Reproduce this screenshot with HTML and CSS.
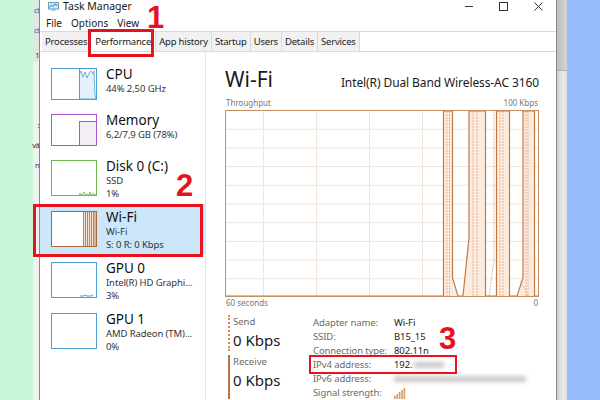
FILE: index.html
```html
<!DOCTYPE html>
<html lang="en">
<head>
    <meta charset="UTF-8">
    <meta name="viewport" content="width=device-width, initial-scale=1.0">
    <title>Task Manager - Wi-Fi</title>
    <link rel="stylesheet" href="styles.css">
</head>
<body>
<div class="screen">
    <div class="bg-left"></div>
    <div class="behind">
        <div class="frag f1">ct</div>
        <div class="frag f2">ct</div>
        <div class="frag f3">1</div>
        <div class="frag f4">:</div>
        <div class="frag f5">vä</div>
        <div class="frag f6">n</div>
    </div>

    <div class="window">
        <div class="titlebar">
            <svg class="app-icon" width="11" height="9" viewBox="0 0 11 9">
                <rect x="0.5" y="0.5" width="10" height="6.5" fill="#d7e8f4" stroke="#6f9cbb"/>
                <polyline points="1.5,5.5 3.5,3 5,4.5 7,2 9.5,3.5" fill="none" stroke="#2b7bb4" stroke-width="1"/>
                <rect x="3.5" y="7.5" width="4" height="1" fill="#6f9cbb"/>
            </svg>
            <span class="app-title">Task Manager</span>
            <div class="controls">
                <span class="ctl"><svg width="8" height="8" viewBox="0 0 8 8"><line x1="0" y1="4.5" x2="8" y2="4.5" stroke="#333"/></svg></span>
                <span class="ctl"><svg width="9" height="9" viewBox="0 0 9 9"><rect x="0.5" y="0.5" width="8" height="8" fill="none" stroke="#333"/></svg></span>
                <span class="ctl"><svg width="9" height="9" viewBox="0 0 9 9"><path d="M0.5 0.5 L8.5 8.5 M8.5 0.5 L0.5 8.5" stroke="#333"/></svg></span>
            </div>
        </div>

        <div class="menubar">
            <span>File</span>
            <span>Options</span>
            <span>View</span>
        </div>

        <div class="tabs">
            <span class="tab">Processes</span>
            <span class="tab active">Performance</span>
            <span class="tab">App history</span>
            <span class="tab">Startup</span>
            <span class="tab">Users</span>
            <span class="tab">Details</span>
            <span class="tab">Services</span>
        </div>

        <div class="content">
            <div class="sidebar">
                <div class="item">
                    <svg class="thumb" width="46" height="32" viewBox="0 0 46 32">
                        <rect x="0.5" y="0.5" width="45" height="31" fill="#fff" stroke="#4d9fd6"/>
                        <path d="M28.5 31 L28.5 6 L30 3 L32 9 L34 4 L36 10 L38 5 L40 3 L42 6 L43 3 L44 27 L45 31 Z" fill="#e4f0fa" stroke="#4d9fd6" stroke-width="0.8"/>
                        <line x1="28.5" y1="0" x2="28.5" y2="32" stroke="#4d9fd6"/>
                    </svg>
                    <div class="info">
                        <div class="name">CPU</div>
                        <div class="sub">44% 2,50 GHz</div>
                    </div>
                </div>
                <div class="item">
                    <svg class="thumb" width="46" height="32" viewBox="0 0 46 32">
                        <rect x="0.5" y="0.5" width="45" height="31" fill="#fff" stroke="#b154c9"/>
                        <rect x="28.5" y="7.5" width="17" height="24" fill="#f3eef5" stroke="#b154c9"/>
                    </svg>
                    <div class="info">
                        <div class="name">Memory</div>
                        <div class="sub">6,2/7,9 GB (78%)</div>
                    </div>
                </div>
                <div class="item tall">
                    <svg class="thumb" width="46" height="36" viewBox="0 0 46 36">
                        <rect x="0.5" y="0.5" width="45" height="35" fill="#fff" stroke="#6db84c"/>
                        <polyline points="28,35 29,33 30,35 32,34 33,32 34,35 36,34 38,35 39,32 40,35 42,33 43,35 45,34" fill="none" stroke="#6db84c" stroke-width="0.8"/>
                    </svg>
                    <div class="info">
                        <div class="name">Disk 0 (C:)</div>
                        <div class="sub">SSD</div>
                        <div class="sub">1%</div>
                    </div>
                </div>
                <div class="item tall selected">
                    <svg class="thumb" width="46" height="36" viewBox="0 0 46 36">
                        <rect x="0.5" y="0.5" width="45" height="35" fill="#fff" stroke="#a86a3d"/>
                        <rect x="32" y="1" width="13" height="34" fill="#f6e4d6"/>
                        <path d="M32.5 1 V35 M34.5 1 V35 M36.5 1 V35 M38.5 1 V35 M40.5 1 V35 M42.5 1 V35 M44 1 V35" stroke="#b06b38" stroke-width="0.8"/>
                    </svg>
                    <div class="info">
                        <div class="name">Wi-Fi</div>
                        <div class="sub">Wi-Fi</div>
                        <div class="sub">S: 0 R: 0 Kbps</div>
                    </div>
                </div>
                <div class="item tall">
                    <svg class="thumb" width="46" height="36" viewBox="0 0 46 36">
                        <rect x="0.5" y="0.5" width="45" height="35" fill="#fff" stroke="#4d9fd6"/>
                        <polyline points="29,34 33,34 34,33 36,34 40,34 42,33" fill="none" stroke="#4d9fd6" stroke-width="1"/>
                    </svg>
                    <div class="info">
                        <div class="name">GPU 0</div>
                        <div class="sub">Intel(R) HD Graphi...</div>
                        <div class="sub">3%</div>
                    </div>
                </div>
                <div class="item tall">
                    <svg class="thumb" width="46" height="36" viewBox="0 0 46 36">
                        <rect x="0.5" y="0.5" width="45" height="35" fill="#fff" stroke="#4d9fd6"/>
                    </svg>
                    <div class="info">
                        <div class="name">GPU 1</div>
                        <div class="sub">AMD Radeon (TM)...</div>
                        <div class="sub">0%</div>
                    </div>
                </div>
            </div>

            <div class="main">
                <div class="head">
                    <h1>Wi-Fi</h1>
                    <span class="adapter">Intel(R) Dual Band Wireless-AC 3160</span>
                </div>
                <div class="axis">
                    <span>Throughput</span>
                    <span>100 Kbps</span>
                </div>
                <svg class="graph" width="314" height="187" viewBox="0 0 314 187">
                    <g stroke="#f1e4d8" stroke-width="1">
                        <path d="M0 19.2 H314 M0 37.9 H314 M0 56.6 H314 M0 75.3 H314 M0 94 H314 M0 112.7 H314 M0 131.4 H314 M0 150.1 H314 M0 168.8 H314"/>
                        <path d="M38.5 0 V187 M91.5 0 V187 M144.5 0 V187 M197.5 0 V187 M250.5 0 V187 M303.5 0 V187"/>
                    </g>
                    <path d="M218.5 186 V1 H227.5 V168 L233 186 Z M244 128 V1 H260.5 V186 H238 Z M271.5 186 V1 H284.5 V186 Z M298 168 V1 H309.5 V186 H292 Z" fill="#fcece0"/>
                    <g fill="none" stroke="#e7a57a" stroke-width="0.8" stroke-dasharray="2 1">
                        <path d="M222 186 V1 M224.5 186 V1 M248 186 V1 M252 186 V1 M264 186 L269 150 V1 M275 186 V1 M278 186 V1 M301 186 V1 M303 186 V1 M303 186 L295 170"/>
                    </g>
                    <path d="M0 186 H218.5 V1 H227.5 V168 L233 186 H238 L244 128 V1 H260.5 V186 H271.5 V1 H284.5 V186 H292 L298 168 V1 H309.5 V186 H314" fill="none" stroke="#bf7a45" stroke-width="1.2"/>
                    <rect x="0.5" y="0.5" width="313" height="186" fill="none" stroke="#c68f62"/>
                </svg>
                <div class="axis">
                    <span>60 seconds</span>
                    <span>0</span>
                </div>

                <div class="stats">
                    <div class="rates">
                        <div class="rate send">
                            <div class="rate-label">Send</div>
                            <div class="rate-value">0 Kbps</div>
                        </div>
                        <div class="rate receive">
                            <div class="rate-label">Receive</div>
                            <div class="rate-value">0 Kbps</div>
                        </div>
                    </div>
                    <div class="details">
                        <span class="lbl">Adapter name:</span><span class="val">Wi-Fi</span>
                        <span class="lbl">SSID:</span><span class="val">B15_15</span>
                        <span class="lbl">Connection type:</span><span class="val">802.11n</span>
                        <span class="lbl">IPv4 address:</span><span class="val">192.<span class="blur short"></span></span>
                        <span class="lbl">IPv6 address:</span><span class="val"><span class="blur long"></span></span>
                        <span class="lbl">Signal strength:</span>
                        <span class="val">
                            <svg width="12" height="11" viewBox="0 0 12 11">
                                <g fill="#d39a66">
                                    <rect x="0" y="8" width="1.6" height="3"/>
                                    <rect x="2.4" y="6" width="1.6" height="5"/>
                                    <rect x="4.8" y="4" width="1.6" height="7"/>
                                    <rect x="7.2" y="2" width="1.6" height="9"/>
                                    <rect x="9.6" y="0" width="1.6" height="11"/>
                                </g>
                            </svg>
                        </span>
                    </div>
                </div>
            </div>
        </div>
    </div>

    <div class="scrollbar"><div class="thumbbar"></div></div>
    <div class="bg-right"></div>

    <!-- annotation marks drawn over the screenshot -->
    <div class="mark box1"></div>
    <div class="mark box2"></div>
    <div class="mark box3"></div>
    <div class="num n1">1</div>
    <div class="num n2">2</div>
    <div class="num n3">3</div>
</div>
</body>
</html>
```

FILE: styles.css
```css
body {
    margin: 0;
    font-family: "Noto Sans", "Open Sans", sans-serif;
    color: #1a1a1a;
}
.screen {
    position: relative;
    display: flex;
    width: 600px;
    height: 400px;
    overflow: hidden;
    background: #fff;
}
.bg-left {
    width: 33px;
    background: #c8f7d7;
}
.behind {
    position: relative;
    width: 6px;
    background: linear-gradient(#e3e5e3 0, #e3e5e3 62px, #eef3ef 62px);
}
.frag {
    position: absolute;
    right: 0;
    font-size: 7.5px;
    line-height: 10px;
    letter-spacing: -0.6px;
    color: #333;
}
.f1 { top: 5px; color: #3d5fa8; }
.f2 { top: 25px; color: #3d5fa8; }
.f3 { top: 50px; }
.f4 { top: 120px; }
.f5 { top: 140px; }
.f6 { top: 160px; }

.window {
    width: 516px;
    border-left: 1px solid #8a8a8a;
    border-right: 1px solid #8a8a8a;
    display: flex;
    flex-direction: column;
    background: #fff;
}

/* title + menu */
.titlebar {
    height: 16px;
    display: flex;
    align-items: flex-start;
}
.app-icon {
    margin: 2px 0 0 8px;
}
.app-title {
    margin-left: 4px;
    font-size: 10.5px;
    line-height: 13px;
}
.controls {
    margin-left: auto;
    display: flex;
}
.ctl {
    width: 35px;
    height: 12px;
    display: flex;
    justify-content: center;
    align-items: center;
}
.menubar {
    height: 16px;
    display: flex;
    gap: 9px;
    padding-left: 6px;
    font-size: 10px;
    line-height: 17px;
}

/* tabs */
.tabs {
    height: 19px;
    border-top: 1px solid #dadada;
    border-bottom: 1px solid #dadada;
    display: flex;
    padding-left: 2px;
}
.tab {
    padding: 0 3px;
    font-size: 9.5px;
    letter-spacing: -0.2px;
    line-height: 19px;
    background: #f1f1f1;
    border-right: 1px solid #dadada;
}
.tab.active {
    background: #fff;
    padding: 0 4px;
}

.content {
    flex: 1;
    display: flex;
}

/* sidebar */
.sidebar {
    width: 165px;
    border-right: 1px solid #e6e6e6;
    padding-top: 9px;
}
.item {
    box-sizing: border-box;
    height: 46px;
    padding: 6px 0 0 11px;
    display: flex;
    gap: 9px;
}
.item.tall {
    height: 51px;
}
.item.selected {
    background: #cce6fa;
}
.thumb {
    margin-top: 1px;
    flex: none;
}
.name {
    font-size: 13.5px;
    line-height: 15px;
    color: #111;
}
.sub {
    font-size: 9.5px;
    letter-spacing: -0.1px;
    line-height: 13px;
    color: #333;
}

/* main panel */
.main {
    flex: 1;
    padding: 14px 17px 0 19px;
}
.head {
    display: flex;
    justify-content: space-between;
    align-items: baseline;
    height: 26px;
}
.head h1 {
    margin: 0;
    font-size: 21px;
    font-weight: 400;
    line-height: 26px;
}
.adapter {
    font-size: 12px;
    letter-spacing: -0.1px;
}
.axis {
    display: flex;
    justify-content: space-between;
    font-size: 8px;
    line-height: 12px;
    color: #777;
    padding: 0 1px;
}
.head + .axis {
    margin-top: 5px;
}
.graph {
    display: block;
    margin-top: 1px;
}

.stats {
    display: flex;
    margin-top: 6px;
}
.rates {
    width: 85px;
    padding-left: 3px;
}
.rate {
    padding-left: 3px;
}
.send {
    border-left: 2px dotted #e08a52;
}
.receive {
    margin-top: 4px;
    border-left: 2px solid #b87443;
    height: 44px;
}
.rate-label {
    font-size: 9.5px;
    line-height: 14px;
    color: #6b6b6b;
}
.rate-value {
    font-size: 15px;
    line-height: 22px;
}
.details {
    margin-top: 1px;
    display: grid;
    grid-template-columns: 81px auto;
    grid-auto-rows: 14px;
    font-size: 9.5px;
    letter-spacing: -0.1px;
    line-height: 14px;
}
.lbl {
    color: #6b6b6b;
}
.val {
    color: #222;
    display: flex;
    align-items: center;
}
.blur {
    display: inline-block;
    height: 6px;
    background: #c9c9c9;
    filter: blur(2px);
}
.blur.short {
    width: 30px;
    margin-left: 2px;
}
.blur.long {
    width: 132px;
}

/* right side */
.scrollbar {
    width: 10px;
    background: linear-gradient(90deg, #cfcfcf, #e9e9e9 60%, #dedede);
}
.thumbbar {
    height: 70px;
    background: linear-gradient(90deg, #bdbdbd, #d6d6d6);
    border-bottom: 1px solid #b0b0b0;
}
.bg-right {
    flex: 1;
    background: #98bdfa;
}

/* red annotations */
.mark {
    position: absolute;
    box-sizing: border-box;
    border: 3px solid #e8121f;
}
.box1 { left: 88px; top: 29px; width: 66px; height: 28px; }
.box2 { left: 33px; top: 204px; width: 170px; height: 53px; }
.box3 { left: 309px; top: 355px; width: 148px; height: 19px; border-width: 2px; }
.num {
    position: absolute;
    font-family: "Liberation Sans", Arial, sans-serif;
    font-weight: 700;
    font-size: 31px;
    line-height: 30px;
    color: #e8121f;
}
.n1 { left: 147px; top: 3px; }
.n2 { left: 176px; top: 171px; }
.n3 { left: 439px; top: 324px; }
```
